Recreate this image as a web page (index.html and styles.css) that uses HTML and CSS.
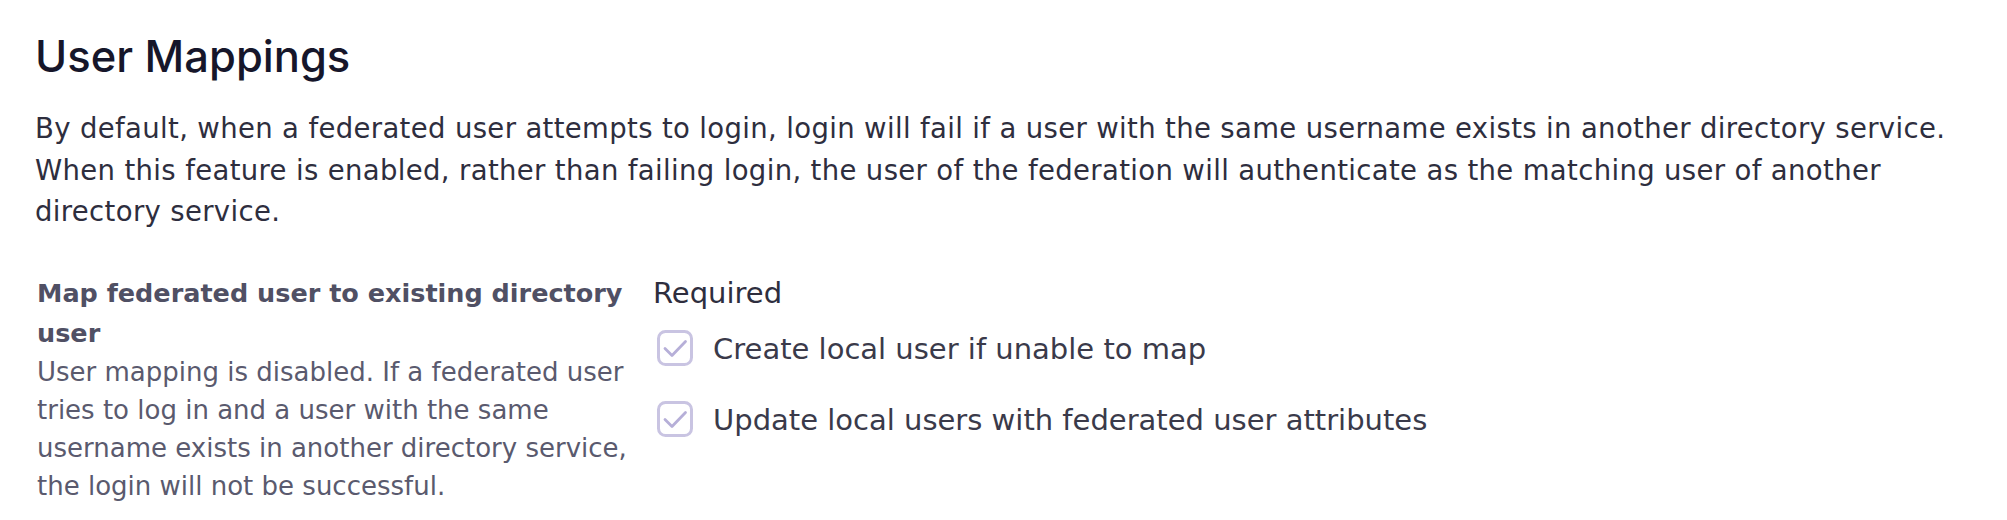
FILE: index.html
```html
<!DOCTYPE html>
<html lang="en">
<head>
<meta charset="utf-8">
<title>User Mappings</title>
<link rel="stylesheet" href="styles.css">
</head>
<body>
<section class="panel">
  <h2 class="title">User Mappings</h2>
  <p class="intro">By default, when a federated user attempts to login, login will fail if a user with the same username exists in another directory service. When this feature is enabled, rather than failing login, the user of the federation will authenticate as the matching user of another directory service.</p>
  <div class="setting">
    <div class="setting-info">
      <div class="setting-label">Map federated user to existing directory user</div>
      <div class="setting-help">User mapping is disabled. If a federated user tries to log in and a user with the same username exists in another directory service, the login will not be successful.</div>
    </div>
    <div class="setting-control">
      <div class="required">Required</div>
      <label class="check">
        <svg class="check-box" viewBox="0 0 36 36" width="36" height="36" aria-hidden="true">
          <rect x="1.5" y="1.5" width="33" height="33" rx="7" ry="7" fill="#ffffff" stroke="#c9c4e2" stroke-width="3"/>
          <path d="M8 18.5 L15 25.5 L28.5 11.5" fill="none" stroke="#b6afd8" stroke-width="2.8" stroke-linecap="round" stroke-linejoin="round"/>
        </svg>
        <span class="check-text">Create local user if unable to map</span>
      </label>
      <label class="check">
        <svg class="check-box" viewBox="0 0 36 36" width="36" height="36" aria-hidden="true">
          <rect x="1.5" y="1.5" width="33" height="33" rx="7" ry="7" fill="#ffffff" stroke="#c9c4e2" stroke-width="3"/>
          <path d="M8 18.5 L15 25.5 L28.5 11.5" fill="none" stroke="#b6afd8" stroke-width="2.8" stroke-linecap="round" stroke-linejoin="round"/>
        </svg>
        <span class="check-text">Update local users with federated user attributes</span>
      </label>
    </div>
  </div>
</section>
</body>
</html>
```

FILE: styles.css
```css
html, body {
  margin: 0;
  padding: 0;
  background: #ffffff;
}

body {
  font-family: "DejaVu Sans", Verdana, sans-serif;
  color: #2e2e3e;
}

.panel {
  padding: 30px 47px 0 35px;
}

.title {
  margin: 0;
  font-family: Inter, "Liberation Sans", sans-serif;
  font-size: 43.5px;
  line-height: 53px;
  font-weight: 500;
  color: #16162a;
}

.intro {
  margin: 25px 0 0 0;
  font-size: 27.5px;
  line-height: 41.5px;
  letter-spacing: 0.35px;
  color: #2e2e3e;
}

.setting {
  display: flex;
  gap: 4px;
  margin-top: 40px;
}

.setting-info {
  width: 612px;
  flex: none;
  padding-left: 2px;
}

.setting-label {
  font-size: 25.5px;
  line-height: 40px;
  font-weight: 700;
  color: #505064;
}

.setting-help {
  font-size: 26px;
  line-height: 38px;
  color: #5a5a6e;
}

.setting-control {
  display: flex;
  flex-direction: column;
}

.required {
  font-size: 29px;
  line-height: 40px;
  color: #2e2e3e;
}

.check {
  display: flex;
  align-items: flex-start;
  gap: 20px;
  margin-left: 4px;
  margin-top: 17px;
}

.check + .check {
  margin-top: 34px;
}

.check-box {
  flex: none;
  display: block;
}

.check-text {
  font-size: 29px;
  line-height: 36px;
  padding-top: 1px;
  color: #3a3a4a;
}
```
